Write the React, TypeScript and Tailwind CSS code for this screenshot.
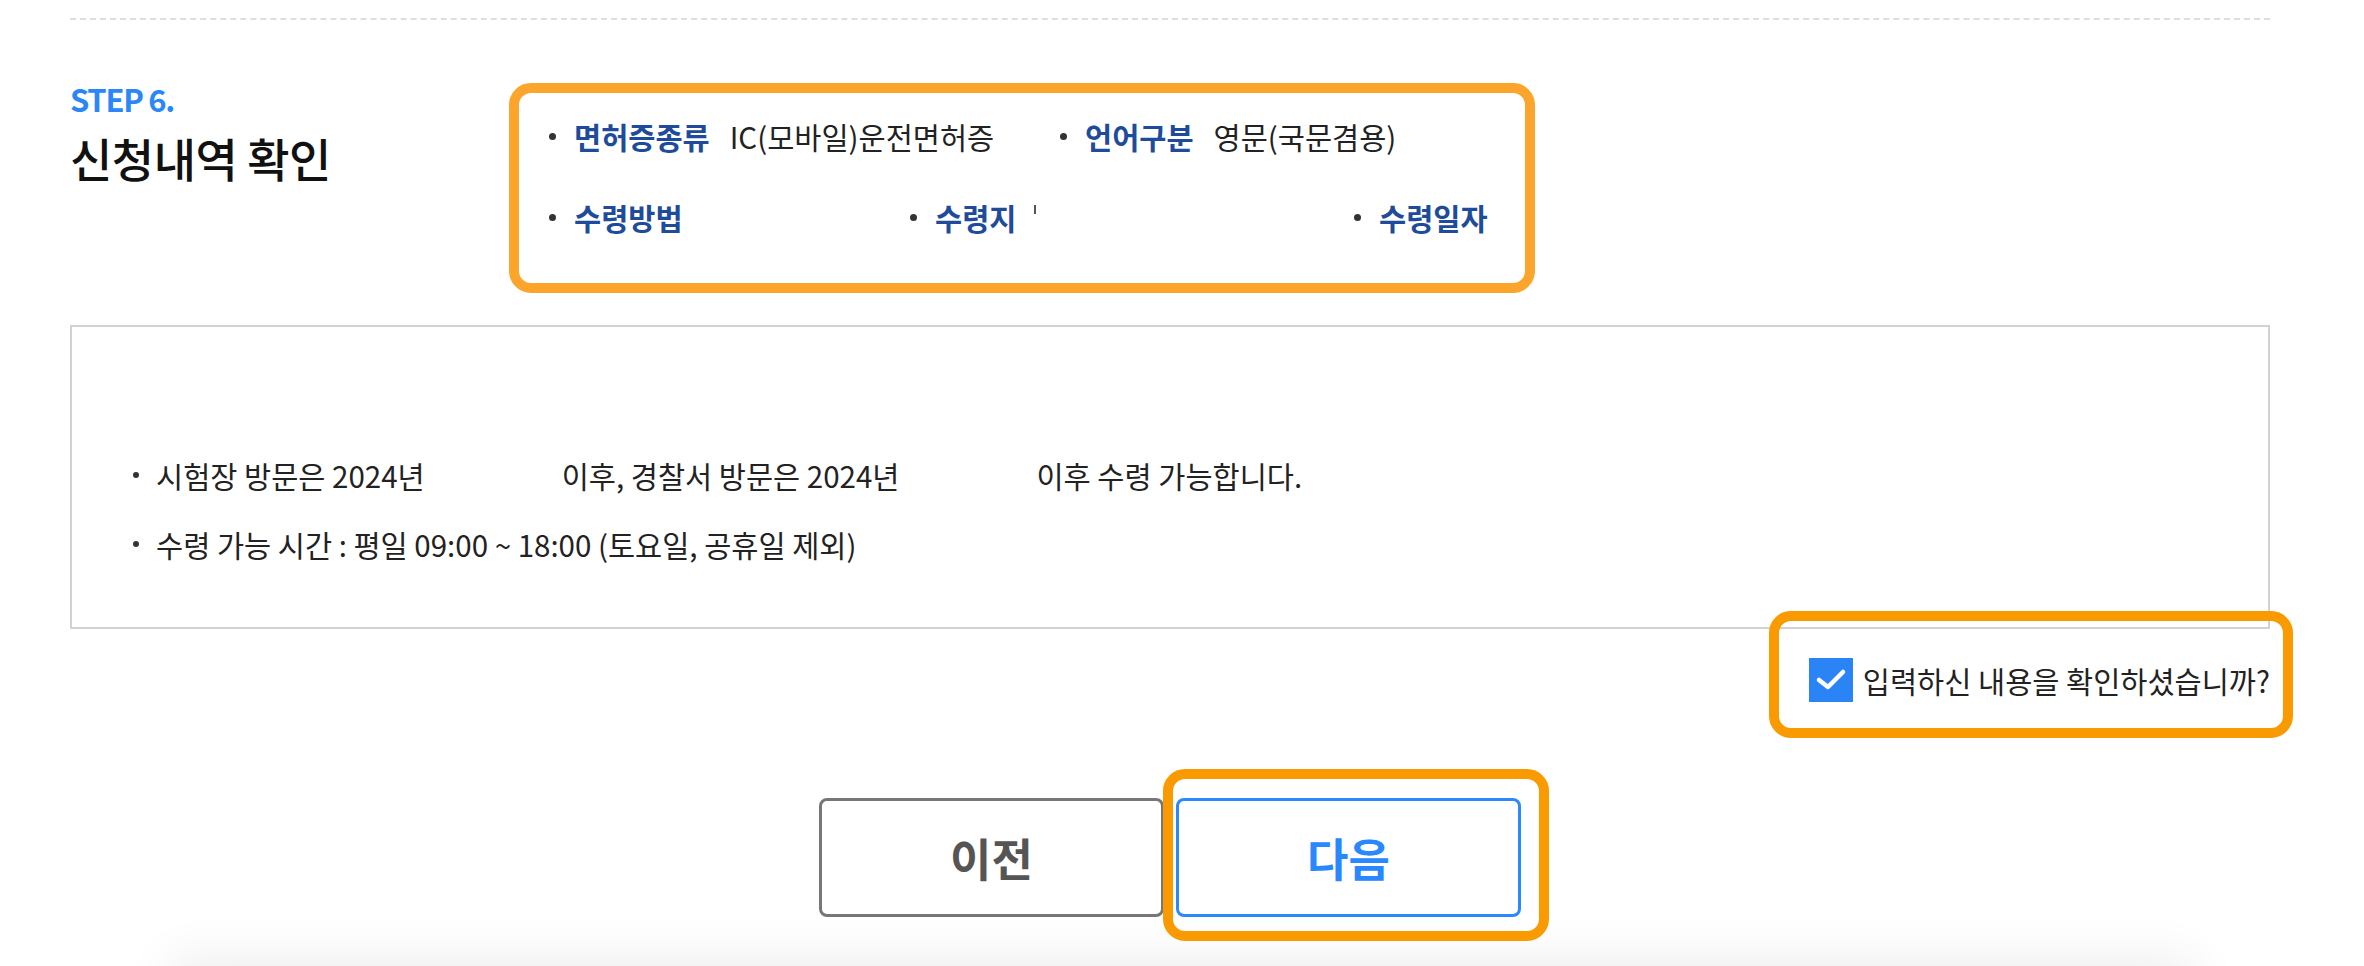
import React from "react";

const infoRows = [
  [
    { w: "w-[511px]", label: "면허증종류", value: "IC(모바일)운전면허증" },
    { w: "", label: "언어구분", value: "영문(국문겸용)" },
  ],
  [
    { w: "w-[361px]", label: "수령방법", value: "" },
    { w: "w-[444px]", label: "수령지", value: "", cut: true },
    { w: "", label: "수령일자", value: "" },
  ],
];

function Highlight({ className }: { className: string }) {
  return <div className={`pointer-events-none absolute rounded-[22px] border-[10px] border-[#f99a00] ${className}`} />;
}

export default function App() {
  return (
    <div className="relative h-[966px] w-full overflow-hidden bg-white font-['Noto_Sans_CJK_KR','Noto_Sans',sans-serif] text-[#222]">
      <div className="ml-[70px] w-[2200px]">
        {/* dashed divider */}
        <div className="pt-[18px]">
          <div className="border-t-2 border-dashed border-[#dedede]" />
        </div>

        {/* step header + summary */}
        <div className="mt-[63px] flex items-start">
          <div className="w-[439px]">
            <p className="text-[31px] font-bold leading-none tracking-[-1.3px] text-[#2b87f8]">STEP 6.</p>
            <h2 className="mt-[20px] text-[46px] font-medium leading-none tracking-[-0.5px] text-[#111]">신청내역 확인</h2>
          </div>

          <div className="w-[1026px] rounded-[22px] border-[10px] border-[#fba52c] pb-[46px] pl-[30px] pt-[23px]">
            {infoRows.map((row, ri) => (
              <div key={ri} className={`flex ${ri > 0 ? "mt-[41px]" : ""}`}>
                {row.map((it) => (
                  <div key={it.label} className={`flex h-[40px] items-center ${it.w}`}>
                    <span className="mr-[18px] h-[7px] w-[7px] rounded-full bg-[#333]" />
                    <span className="text-[29.5px] font-bold leading-[40px] text-[#1e4c9a]">{it.label}</span>
                    {it.value && <span className="ml-[20px] text-[29.5px] leading-[40px] text-[#222]">{it.value}</span>}
                    {it.cut && <span className="mb-[15px] ml-[18px] h-[9px] w-[2px] bg-[#555]" />}
                  </div>
                ))}
              </div>
            ))}
          </div>
        </div>

        {/* notice */}
        <div className="mt-[32px] border-2 border-[#d2d2d2] pb-[63px] pl-[61px] pt-[128px]">
          <ul className="text-[29.5px] leading-[40px] text-[#222]">
            <li className="flex items-center">
              <span className="mr-[17px] h-[6px] w-[6px] rounded-full bg-[#333]" />
              <span>
                시험장 방문은 2024년<span className="inline-block w-[137px]" />이후, 경찰서 방문은 2024년
                <span className="inline-block w-[137px]" />이후 수령 가능합니다.
              </span>
            </li>
            <li className="mt-[29px] flex items-center">
              <span className="mr-[17px] h-[6px] w-[6px] rounded-full bg-[#333]" />
              <span>수령 가능 시간 : 평일 09:00 ~ 18:00 (토요일, 공휴일 제외)</span>
            </li>
          </ul>
        </div>

        {/* confirm checkbox */}
        <div className="mt-[29px] flex justify-end">
          <label className="relative flex items-center">
            <span className="flex h-[44px] w-[44px] items-center justify-center bg-[#2b84f6]">
              <svg width="44" height="44" viewBox="0 0 44 44">
                <polyline points="10,22 19,29 34,14" fill="none" stroke="white" strokeWidth="4.5" strokeLinecap="round" strokeLinejoin="round" />
              </svg>
            </span>
            <span className="ml-[10px] text-[29.5px] leading-[44px] text-[#222]">입력하신 내용을 확인하셨습니까?</span>
            <Highlight className="-bottom-[36px] -left-[40px] -right-[23px] -top-[47px]" />
          </label>
        </div>

        {/* buttons */}
        <div className="mt-[96px] flex justify-center gap-[12px]">
          <button className="flex h-[119px] w-[345px] items-center justify-center rounded-[8px] border-[3px] border-[#777] bg-white text-[45px] font-bold text-[#555]">
            이전
          </button>
          <div className="relative">
            <button className="flex h-[119px] w-[345px] items-center justify-center rounded-[8px] border-[3px] border-[#2b88ff] bg-white text-[45px] font-bold text-[#2a88ff]">
              다음
            </button>
            <Highlight className="-bottom-[24px] -left-[13px] -right-[28px] -top-[29px]" />
          </div>
        </div>
      </div>

      {/* footer edge shadow */}
      <div className="mx-[170px] mt-[49px] h-[100px] bg-white shadow-[0_-8px_50px_rgba(0,0,0,0.07)]" />
    </div>
  );
}
